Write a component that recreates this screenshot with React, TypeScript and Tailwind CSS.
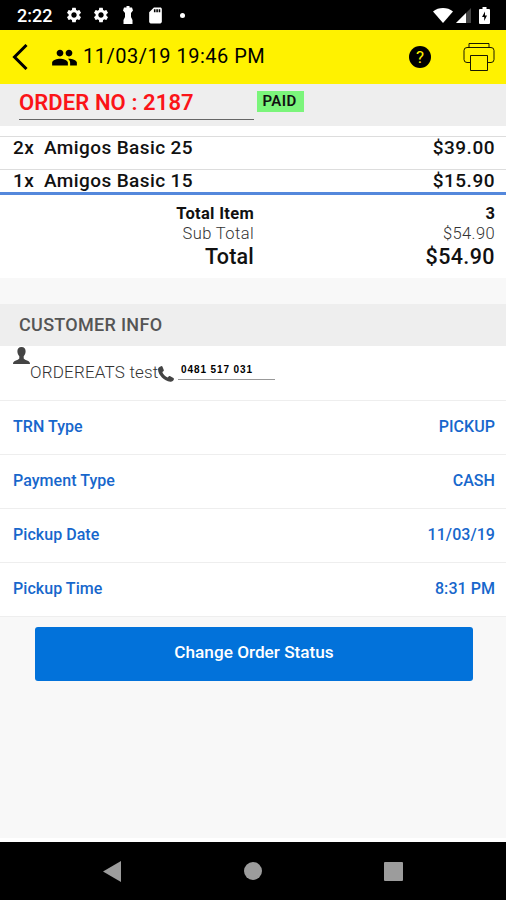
import { MdPeople, MdSettings, MdSdCard } from 'react-icons/md';

type OrderLine = {
  qty: number;
  name: string;
  price: string;
};

const orderLines: OrderLine[] = [
  { qty: 2, name: 'Amigos Basic 25', price: '$39.00' },
  { qty: 1, name: 'Amigos Basic 15', price: '$15.90' },
];

const details = [
  { label: 'TRN Type', value: 'PICKUP' },
  { label: 'Payment Type', value: 'CASH' },
  { label: 'Pickup Date', value: '11/03/19' },
  { label: 'Pickup Time', value: '8:31 PM' },
];

const StatusBar = () => (
  <div className="flex h-[30px] shrink-0 items-center bg-black pl-[17px] pr-[16px] text-white">
    <span className="w-[48px] pt-[2px] text-[18px] leading-none font-medium">2:22</span>
    <MdSettings className="size-[18px]" />
    <MdSettings className="ml-[9px] size-[18px]" />
    <svg className="ml-[12px] h-[18px] w-[12px]" viewBox="0 0 12 18" fill="currentColor">
      <path d="M4.500 0h3v1.500H10l1 3L9 7v4l1.500 3v4h-9v-4L3 11V7L1 4.500l1-3h2.500z" />
    </svg>
    <MdSdCard className="ml-[12px] size-[19px]" />
    <span className="ml-[15px] size-[5px] rounded-full bg-white" />
    <svg className="ml-auto h-[15px] w-[20px]" viewBox="0 0 20 15" fill="currentColor">
      <path d="M0 3.500C5.500-1.100 14.500-1.100 20 3.500L10 15z" />
    </svg>
    <svg className="ml-[3px] h-[15px] w-[15px]" viewBox="0 0 15 15">
      <path d="M15 0v15H0z" fill="#444" />
      <path d="M10 5v10H0z" fill="#fff" />
    </svg>
    <svg className="ml-[8px] h-[17px] w-[11px]" viewBox="0 0 11 17">
      <path d="M3.500 0h4v2H10a1 1 0 0 1 1 1v13a1 1 0 0 1-1 1H1a1 1 0 0 1-1-1V3a1 1 0 0 1 1-1h2.500z" fill="#fff" />
      <path d="M6 4.500 3 10h2.200v4L8 8.500H6z" fill="#000" />
    </svg>
  </div>
);

const Header = () => (
  <header className="flex h-[54px] shrink-0 items-center bg-[#fff200] pl-[12px] pr-[11px] text-black">
    <svg className="h-[26px] w-[16px]" viewBox="0 0 16 26" fill="none" stroke="currentColor" strokeWidth="3">
      <path d="M14.500 1 2.500 13l12 12" />
    </svg>
    <MdPeople className="ml-[23px] size-[27px]" />
    <span className="ml-[5px] pb-[2px] text-[20px] leading-none tracking-[0.5px]">11/03/19 19:46 PM</span>
    <span className="ml-auto flex size-[22px] items-center justify-center rounded-full bg-black pt-px text-[17px] leading-none text-[#fff200]">
      ?
    </span>
    <svg className="ml-[32px] h-[28px] w-[32px]" viewBox="0 0 32 28" fill="none" stroke="currentColor" strokeWidth="0.9">
      <path d="M6 4.500V.5h20v4M7 19.500H4a3 3 0 0 1-3-3v-9a3 3 0 0 1 3-3h24a3 3 0 0 1 3 3v9a3 3 0 0 1-3 3h-3M7.500 12.500h17v15h-17z" />
    </svg>
  </header>
);

const App = () => {
  return (
    <div className="flex h-[900px] w-full flex-col overflow-hidden bg-[#f8f8f8] font-['Roboto',sans-serif] text-[#111]">
      <StatusBar />
      <Header />

      <div className="flex h-[42px] shrink-0 items-start bg-[#eee] pl-[19px]">
        <div className="h-[36px] w-[235px] border-b border-[#666] pt-[7px] text-[22px] leading-[24px] font-semibold tracking-[0.1px] whitespace-nowrap text-[#fb1418]">
          ORDER NO : 2187
        </div>
        <span className="mt-[7px] ml-[3px] flex h-[21px] w-[47px] items-center justify-center bg-[#7bf57b] pr-[2px] text-[15px] font-semibold tracking-[0.4px]">
          PAID
        </span>
      </div>

      <div className="shrink-0 border-b-[3px] border-[#5488dc] bg-white pt-[10px]">
        {orderLines.map((line, i) => (
          <div
            key={line.name}
            className={`flex border-t border-[#ddd] pl-[13px] pr-[11px] text-[19px] leading-[21px] font-medium tracking-[0.4px] ${i === 0 ? 'h-[33px]' : 'h-[23px]'}`}
          >
            <span className="w-[31px]">{line.qty}x</span>
            <span>{line.name}</span>
            <span className="ml-auto tracking-[0.5px]">{line.price}</span>
          </div>
        ))}
      </div>

      <div className="h-[83px] shrink-0 bg-white pt-[9px] pr-[11px]">
        <div className="flex justify-between text-[16.5px] leading-[20px] font-bold">
          <span className="w-[254px] text-right tracking-[0.3px]">Total Item</span>
          <span>3</span>
        </div>
        <div className="flex justify-between text-[16.5px] leading-[20px] font-light text-[#333]">
          <span className="w-[254px] text-right tracking-[0.4px]">Sub Total</span>
          <span className="tracking-[0.4px]">$54.90</span>
        </div>
        <div className="flex justify-between text-[21.5px] leading-[26px] font-medium">
          <span className="w-[254px] text-right tracking-[0.2px]">Total</span>
          <span className="tracking-[0.4px]">$54.90</span>
        </div>
      </div>

      <div className="mt-[26px] flex h-[42px] shrink-0 items-center bg-[#eee] pl-[19px] text-[18px] leading-[26px] font-medium tracking-[0.3px] text-[#555]">
        CUSTOMER INFO
      </div>

      <div className="flex h-[54px] shrink-0 items-start bg-white pl-[13px]">
        <svg className="mt-[1px] h-[18px] w-[17px]" viewBox="0 0 17 18" fill="#444">
          <path d="M8.500 0c2.700 0 4.300 1.900 4.100 4.500-.1 2-.9 3.600-1.900 4.700v2.300c.3.900 2.400 1.400 4 2.200 1.400.7 2.300 1.500 2.300 3.300H0c0-1.800.9-2.600 2.300-3.300 1.600-.8 3.700-1.300 4-2.200V9.200C5.300 8.100 4.500 6.500 4.400 4.500 4.200 1.900 5.800 0 8.500 0z" />
        </svg>
        <span className="mt-[16px] w-[128px] text-[17px] leading-[20px] font-light tracking-[0.2px] whitespace-nowrap text-[#333]">
          ORDEREATS test
        </span>
        <svg className="mt-[20px] h-[16px] w-[16px]" viewBox="0 0 16 16" fill="#444">
          <path d="M1.500 1 3.500 0c.6 0 .9.400 1.100.9l1.200 3c.2.600 0 1-.4 1.300L4.300 6c.9 2.300 2.900 4.300 5.300 5.500l1.300-1.200c.5-.4.900-.4 1.400-.1l3.100 1.900c.5.300.7.700.5 1.200-.4 1.500-1.800 2.700-3.600 2.500C6.200 15.200.2 9.100 0 3.600 0 2.500.6 1.600 1.500 1z" />
        </svg>
        <div className="mt-[16px] ml-[4px] h-[18px] w-[97px] border-b border-[#999] pl-[3px] font-['Liberation_Sans',sans-serif] text-[10px] leading-[15px] font-bold tracking-[0.9px] text-black">
          0481 517 031
        </div>
      </div>

      {details.map((row) => (
        <div
          key={row.label}
          className="flex h-[54px] shrink-0 items-center justify-between border-t border-[#eee] bg-white pr-[11px] pb-[2px] pl-[13px] text-[16px] font-medium tracking-[0.05px] text-[#1767cc]"
        >
          <span>{row.label}</span>
          <span>{row.value}</span>
        </div>
      ))}

      <div className="grow border-t border-[#eee] px-[35px] pt-[10px]">
        <button className="h-[54px] w-[438px] rounded-[3px] bg-[#0272da] pb-[2px] text-[17.200px] font-medium text-white">
          Change Order Status
        </button>
      </div>

      <nav className="flex h-[62px] shrink-0 items-center border-t-[4px] border-white bg-black">
        <svg className="ml-[103px] h-[21px] w-[18px]" viewBox="0 0 18 21" fill="#9c9c9c">
          <path d="M18 0v21L0 10.500z" />
        </svg>
        <span className="ml-[123px] size-[18px] rounded-full bg-[#9c9c9c]" />
        <span className="ml-[122px] size-[19px] rounded-[1px] bg-[#9c9c9c]" />
      </nav>
    </div>
  );
};

export default App;
